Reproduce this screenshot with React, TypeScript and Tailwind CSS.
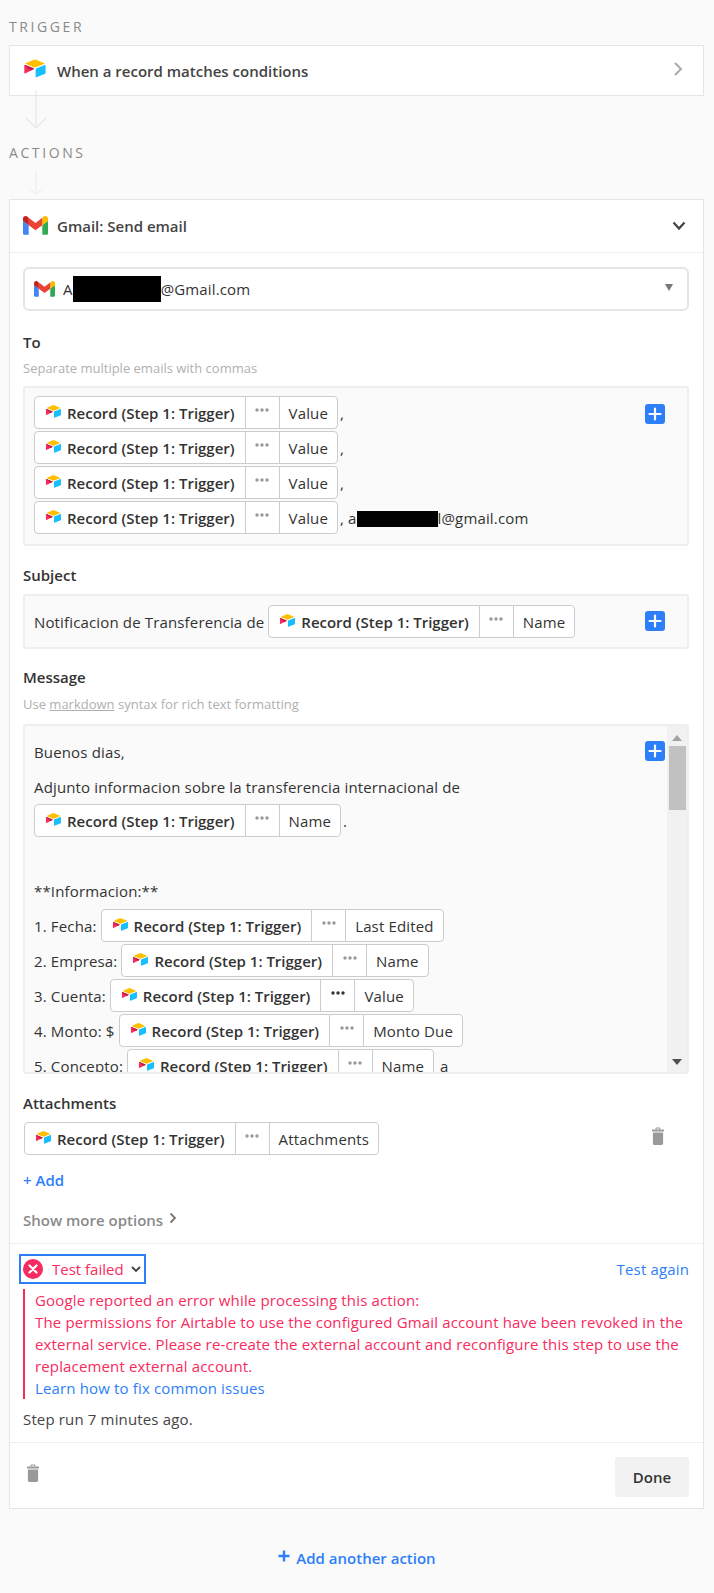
import React from 'react';

function AirtableIcon({ className }: { className: string }) {
  return (
    <svg viewBox="0 0 200 170" className={className}>
      <path fill="#FFBF00" d="M90.039 12.368 24.079 39.66c-3.667 1.519-3.63 6.729.062 8.192l66.235 26.266a24.58 24.58 0 0 0 18.12 0l66.236-26.266c3.69-1.463 3.729-6.673.062-8.192l-65.96-27.292a24.58 24.58 0 0 0-18.795 0" />
      <path fill="#18BFFF" d="M105.312 88.46v65.617c0 3.12 3.147 5.258 6.048 4.108l73.806-28.648a4.42 4.42 0 0 0 2.79-4.108V59.813c0-3.121-3.147-5.258-6.048-4.108l-73.806 28.648a4.42 4.42 0 0 0-2.79 4.108" />
      <path fill="#F82B60" d="M88.078 91.846l-21.904 10.576-2.224 1.075-46.238 22.155c-2.93 1.414-6.672-.722-6.672-3.978V60.088c0-1.178.604-2.195 1.414-2.96a5 5 0 0 1 1.11-.832c1.104-.663 2.68-.84 4.02-.31L87.71 83.76c3.564 1.414 3.844 6.408.368 8.087" />
      <path fill="#BA1E45" d="M88.078 91.846l-21.904 10.576L12.454 57.135a5 5 0 0 1 1.11-.832c1.104-.663 2.68-.84 4.02-.31L87.71 83.76c3.564 1.414 3.844 6.408.368 8.087" />
    </svg>
  );
}

function GmailIcon({ className }: { className: string }) {
  return (
    <svg viewBox="0 0 256 193" className={className}>
      <path fill="#4285F4" d="M58.182 192.05V93.14L27.507 65.077 0 49.504v125.091c0 9.658 7.825 17.455 17.455 17.455z" />
      <path fill="#34A853" d="M197.818 192.05h40.727c9.659 0 17.455-7.826 17.455-17.455V49.505l-31.156 17.837-27.026 25.798z" />
      <path fill="#EA4335" d="M58.182 93.14l-4.174-38.647 4.174-36.989L128 69.868l69.818-52.364 4.669 34.992-4.669 40.644L128 145.504z" />
      <path fill="#FBBC04" d="M197.818 17.504V93.14L256 49.504V26.231c0-21.585-24.64-33.89-41.89-20.945z" />
      <path fill="#C5221F" d="M0 49.504l26.759 20.07L58.182 93.14V17.504L41.89 5.286C24.61-7.66 0 4.646 0 26.23z" />
    </svg>
  );
}

function TrashIcon() {
  return (
    <svg viewBox="0 0 12 18" className="w-3 h-[18px]" fill="#999">
      <path d="M3.5 2.6V1.6C3.5.9 4 .4 4.7.4h2.6c.7 0 1.2.5 1.2 1.2v1H7.4V1.5H4.6v1.1z" />
      <rect x="0" y="2.6" width="12" height="1.9" rx="0.6" />
      <path d="M.9 5.4h10.2v10.8c0 1-.8 1.8-1.8 1.8H2.7c-1 0-1.8-.8-1.8-1.8z" />
    </svg>
  );
}

function PlusButton() {
  return (
    <div className="w-5 h-5 rounded-[3px] bg-[#2d7ff9] flex items-center justify-center shrink-0">
      <svg viewBox="0 0 14 14" className="w-3.5 h-3.5" stroke="#fff" strokeWidth="2.2" strokeLinecap="round">
        <path d="M7 1.5v11M1.5 7h11" />
      </svg>
    </div>
  );
}

function Dots({ dark }: { dark?: boolean }) {
  return (
    <svg viewBox="0 0 14 4" className="w-3.5 h-1 -mt-1.5">
      <g fill={dark ? '#333' : '#999'}>
        <circle cx="2" cy="2" r="1.7" />
        <circle cx="7" cy="2" r="1.7" />
        <circle cx="12" cy="2" r="1.7" />
      </g>
    </svg>
  );
}

function Pill({ field, dark }: { field: string; dark?: boolean }) {
  return (
    <span className="inline-flex h-[33px] shrink-0 items-stretch rounded-[4px] border border-[#cccccc] bg-white text-[#333333]">
      <span className="flex items-center pl-[10px] pr-[10px] border-r border-[#cccccc]">
        <AirtableIcon className="w-[17px] h-[15px] mr-[5px] -mt-0.5" />
        <span className="pt-[2px] font-semibold tracking-normal whitespace-nowrap">Record (Step 1: Trigger)</span>
      </span>
      <span className="flex w-[34px] items-center justify-center border-r border-[#cccccc]">
        <Dots dark={dark} />
      </span>
      <span className="flex items-center px-[9px] pt-[2px] whitespace-nowrap">{field}</span>
    </span>
  );
}

function Row({ label, field, dark, after }: { label?: string; field: string; dark?: boolean; after?: React.ReactNode }) {
  return (
    <div className="flex h-[35px] items-center whitespace-nowrap">
      {label && <span className="mr-[4px] pt-[2px]">{label}</span>}
      <Pill field={field} dark={dark} />
      {after}
    </div>
  );
}

function FieldLabel({ children }: { children: React.ReactNode }) {
  return <div className="h-[22px] leading-[22px] font-semibold tracking-normal text-[#333333]">{children}</div>;
}

function Arrow({ className }: { className: string }) {
  return (
    <svg viewBox="0 0 24 40" className={className} fill="none" stroke="#e6e6e6" strokeWidth="1.2">
      <path d="M12 0v38M2 28l10 10 10-10" />
    </svg>
  );
}

export default function App() {
  return (
    <div className="relative w-[714px] h-[1593px] bg-[#fafafa] text-[15px] tracking-[0.15px] text-[#333333] font-['Open_Sans','Noto_Sans',sans-serif] overflow-hidden">
      {/* Trigger */}
      <div className="pl-[9px] pt-[17px] h-[45px] text-[14px] leading-5 font-medium tracking-[2.6px] text-[#8a8a8a]">TRIGGER</div>
      <div className="ml-[9px] mr-[10px] h-[51px] bg-white border border-[#e5e5e5] flex items-center pl-[13px] pr-[20px]">
        <AirtableIcon className="w-6 h-[21px] mr-[10px] -mt-1" />
        <span className="font-semibold tracking-normal flex-1 text-[#444444] mt-[1px]">When a record matches conditions</span>
        <svg viewBox="0 0 10 16" className="w-[10px] h-4 -mt-1" fill="none" stroke="#aaaaaa" strokeWidth="2"><path d="M2 2l6 6-6 6" /></svg>
      </div>
      <Arrow className="absolute left-[24px] top-[90px] w-6 h-10" />

      {/* Actions */}
      <div className="pl-[9px] pt-[47px] h-[103px] text-[14px] leading-5 font-medium tracking-[2.6px] text-[#8a8a8a]">ACTIONS</div>
      <Arrow className="absolute left-[24px] top-[170px] w-6 h-[26px]" />

      <div className="ml-[9px] mr-[10px] h-[1310px] bg-white border border-[#e5e5e5]">
        {/* Card header */}
        <div className="h-[53px] flex items-center pl-[13px] pr-[17px] border-b border-[#eeeeee]">
          <GmailIcon className="w-[25px] h-[21px] mr-[9px] -mt-0.5" />
          <span className="font-semibold tracking-normal flex-1 text-[#444444]">Gmail: Send email</span>
          <svg viewBox="0 0 14 10" className="w-[14px] h-[10px]" fill="none" stroke="#444444" strokeWidth="2.2"><path d="M1.5 1.5L7 7.5l5.5-6" /></svg>
        </div>

        <div className="pl-[13px] pr-[14px] pt-[14px]">
          {/* Account select */}
          <div className="h-[44px] rounded-[6px] border-2 border-[#e5e5e5] flex items-center pl-[9px] pr-[14px]">
            <GmailIcon className="w-[21px] h-4 mr-[8px]" />
            <span>A</span>
            <span className="inline-block w-[88px] h-[26px] bg-black" />
            <span className="flex-1">@Gmail.com</span>
            <svg viewBox="0 0 8 7" className="w-2 h-[7px] -mt-1" fill="#777777"><path d="M0 0h8L4 7z" /></svg>
          </div>

          {/* To */}
          <div className="mt-[20px]"><FieldLabel>To</FieldLabel></div>
          <div className="mt-[6px] h-[18px] leading-[18px] text-[13px] tracking-normal text-[#b0b0b0]">Separate multiple emails with commas</div>
          <div className="mt-[9px] h-[160px] rounded-[3px] border-2 border-[#eeeeee] bg-[#fafafa] flex justify-between pl-[9px] pr-[22px] pt-[7px]">
            <div>
              <Row field="Value" after={<span className="ml-[2px] pt-[2px]">,</span>} />
              <Row field="Value" after={<span className="ml-[2px] pt-[2px]">,</span>} />
              <Row field="Value" after={<span className="ml-[2px] pt-[2px]">,</span>} />
              <Row
                field="Value"
                after={
                  <>
                    <span className="ml-[2px] pt-[2px]">, a</span>
                    <span className="inline-block w-[81px] h-4 mt-[3px] bg-black" />
                    <span className="pt-[2px]">l@gmail.com</span>
                  </>
                }
              />
            </div>
            <div className="mt-[9px]"><PlusButton /></div>
          </div>

          {/* Subject */}
          <div className="mt-[18px]"><FieldLabel>Subject</FieldLabel></div>
          <div className="mt-[8px] h-[55px] rounded-[3px] border-2 border-[#eeeeee] bg-[#fafafa] flex items-center justify-between pl-[9px] pr-[22px]">
            <Row label="Notificacion de Transferencia de" field="Name" />
            <div className="-mt-[1px]"><PlusButton /></div>
          </div>

          {/* Message */}
          <div className="mt-[17px]"><FieldLabel>Message</FieldLabel></div>
          <div className="mt-[7px] h-[18px] leading-[18px] text-[13px] tracking-normal text-[#b0b0b0]">
            Use <span className="underline">markdown</span> syntax for rich text formatting
          </div>
          <div className="mt-[11px] h-[350px] rounded-[3px] border-2 border-[#eeeeee] bg-[#fafafa] flex overflow-hidden">
            <div className="relative flex-1 pl-[9px] pt-[9px] overflow-hidden">
              <div className="absolute right-[2px] top-[15px]"><PlusButton /></div>
              <div className="h-[35px] leading-[35px]">Buenos dias,</div>
              <div className="h-[33px] leading-[35px]">Adjunto informacion sobre la transferencia internacional de</div>
              <Row field="Name" after={<span className="ml-[2px] pt-[2px]">.</span>} />
              <div className="mt-[37px] h-[35px] -translate-y-[1px] leading-[35px]">**Informacion:**</div>
              <div className="-mt-[2px]">
                <Row label="1. Fecha:" field="Last Edited" />
                <Row label="2. Empresa:" field="Name" />
                <Row label="3. Cuenta:" field="Value" dark />
                <Row label="4. Monto: $" field="Monto Due" />
                <Row label="5. Concepto:" field="Name" after={<span className="ml-[6px] pt-[2px]">a</span>} />
              </div>
            </div>
            <div className="w-[20px] shrink-0 bg-[#f1f1f1] flex flex-col items-center pt-[9px] pb-[7px]">
              <svg viewBox="0 0 10 6" className="w-[10px] h-[6px]" fill="#a3a3a3"><path d="M5 0l5 6H0z" /></svg>
              <div className="mt-[5px] w-[17px] h-[64px] bg-[#c1c1c1]" />
              <div className="flex-1" />
              <svg viewBox="0 0 10 6" className="w-[10px] h-[6px]" fill="#505050"><path d="M0 0h10L5 6z" /></svg>
            </div>
          </div>

          {/* Attachments */}
          <div className="mt-[18px]"><FieldLabel>Attachments</FieldLabel></div>
          <div className="mt-[8px] ml-[1px] flex justify-between pr-[25px]">
            <Pill field="Attachments" />
            <div className="mt-[5px]"><TrashIcon /></div>
          </div>
          <div className="mt-[14px] h-[22px] leading-[22px] font-semibold tracking-normal text-[#2d7ff9]">+ Add</div>
          <div className="mt-[18px] h-[22px] flex items-center font-semibold tracking-normal text-[#8a8a8a]">
            Show more options
            <svg viewBox="0 0 8 12" className="w-2 h-3 ml-[6px] -mt-1" fill="none" stroke="#777777" strokeWidth="1.8"><path d="M1.5 1.5L6 6l-4.5 4.5" /></svg>
          </div>
        </div>

        {/* Test result */}
        <div className="mt-[12px] border-t border-[#eeeeee] pl-[13px] pr-[14px] pt-[10px] h-[199px]">
          <div className="flex items-center justify-between h-[30px]">
            <div className="-ml-[4px] h-[30px] w-[127px] border-2 border-[#2d7ff9] flex items-center pl-[2px]">
              <svg viewBox="0 0 20 20" className="w-5 h-5 mr-[9px] shrink-0">
                <circle cx="10" cy="10" r="10" fill="#f82b60" />
                <path d="M6.5 6.5l7 7M13.5 6.5l-7 7" stroke="#fff" strokeWidth="2.2" strokeLinecap="round" />
              </svg>
              <span className="text-[#f82b60] tracking-normal whitespace-nowrap">Test failed</span>
              <svg viewBox="0 0 10 7" className="w-[10px] h-[7px] ml-[7px] shrink-0" fill="none" stroke="#444444" strokeWidth="1.8"><path d="M1 1l4 4 4-4" /></svg>
            </div>
            <span className="text-[#2d7ff9]">Test again</span>
          </div>
          <div className="mt-[5px] border-l-2 border-[#f82b60] pl-[10px] leading-[22px] h-[110px] text-[#f82b60]">
            <div>Google reported an error while processing this action:</div>
            <div>The permissions for Airtable to use the configured Gmail account have been revoked in the external service. Please re-create the external account and reconfigure this step to use the replacement external account.</div>
            <div className="text-[#2d7ff9]">Learn how to fix common issues</div>
          </div>
          <div className="mt-[9px] h-[22px] leading-[22px] text-[#444444]">Step run 7 minutes ago.</div>
        </div>

        {/* Footer */}
        <div className="border-t border-[#eeeeee] h-[65px] flex justify-between pl-[17px] pr-[14px] pt-[14px]">
          <div className="mt-[7px]"><TrashIcon /></div>
          <div className="w-[74px] h-[40px] rounded-[3px] bg-[#f2f2f2] flex items-center justify-center font-semibold tracking-normal text-[#333333]">Done</div>
        </div>
      </div>

      <div className="mt-[38px] flex items-center justify-center font-semibold tracking-normal text-[#2d7ff9]">
        <svg viewBox="0 0 12 12" className="w-3 h-3 mr-[6px] -mt-1" stroke="#2d7ff9" strokeWidth="2.4"><path d="M6 .5v11M.5 6h11" /></svg>
        Add another action
      </div>
    </div>
  );
}
